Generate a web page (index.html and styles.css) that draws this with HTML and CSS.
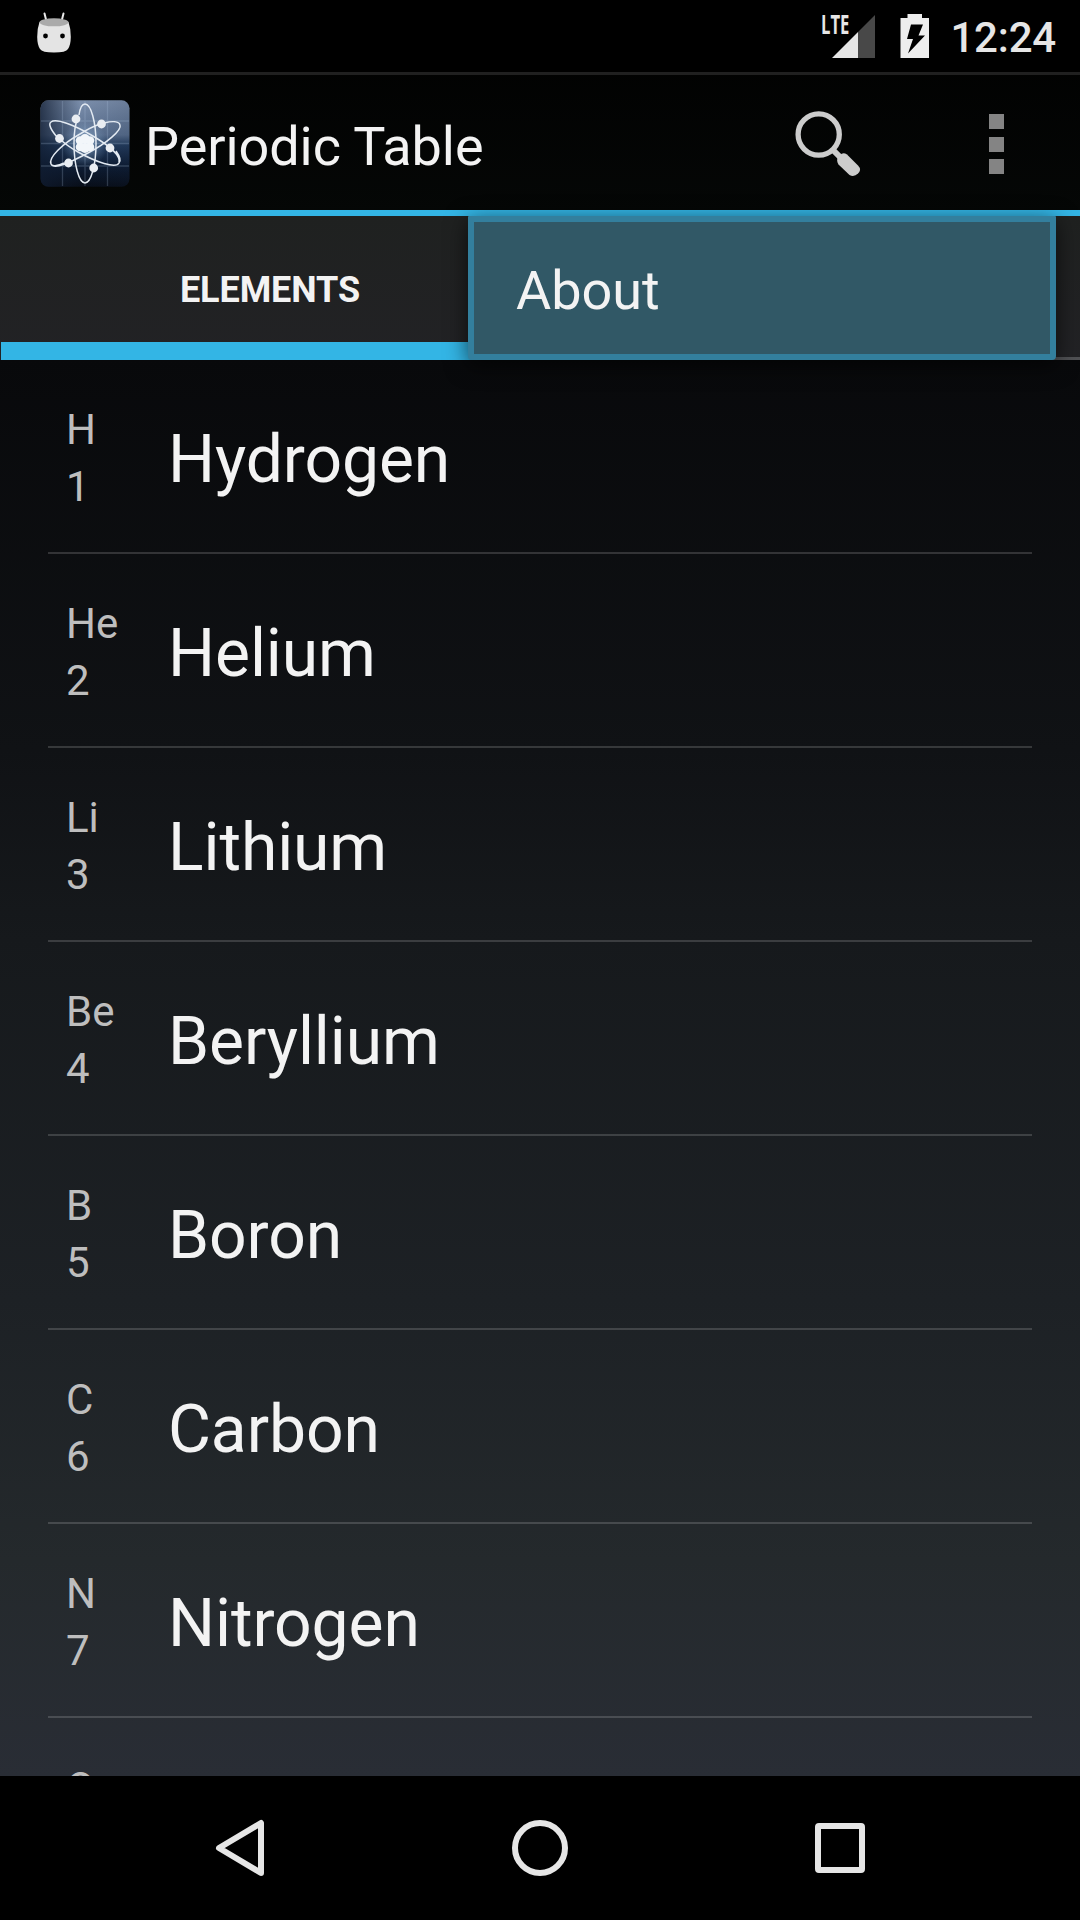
FILE: index.html
```html
<!DOCTYPE html>
<html lang="en">
<head>
<meta charset="utf-8">
<title>Periodic Table</title>
<link rel="stylesheet" href="styles.css">
</head>
<body>
<div class="screen">
  <header class="status-bar">
    <svg class="debug-icon" width="36" height="42" viewBox="0 0 36 42">
      <path d="M8.500 1.500l2 8M27.500 1.500l-2 8" stroke="#e8e8e8" stroke-width="2" stroke-linecap="round"/>
      <path d="M3.500 10Q18 5 32.500 10Q35 17 34.800 25Q34.700 33 32 37Q30 40.500 18 40.600Q6 40.500 4 37Q1.300 33 1.200 25Q1 17 3.500 10Z" fill="#e4e4e4"/>
      <ellipse cx="18" cy="10.300" rx="14.500" ry="4" fill="#aaa"/>
      <circle cx="9.500" cy="24" r="2.400" fill="#000"/><circle cx="26.500" cy="24" r="2.400" fill="#000"/>
    </svg>
    <div class="status-right">
      <div class="signal">
        <span class="network">LTE</span>
        <svg width="43" height="43" viewBox="0 0 43 43"><path d="M43 0V43H26V17Z" fill="#484848"/><path d="M0 43L26 17V43Z" fill="#e6e6e6"/></svg>
      </div>
      <svg class="battery" width="30" height="44" viewBox="0 0 30 44"><path d="M7.500 0H22V4H29V44H.500V4H7.500Z" fill="#eee"/><path d="M11 10.500H23L18.500 21.500H25L8 39.500L13 25H7Z" fill="#000"/></svg>
      <span class="clock">12:24</span>
    </div>
  </header>

  <div class="action-bar">
    <svg class="app-icon" width="90" height="88" viewBox="0 0 90 88">
      <defs>
        <linearGradient id="sky" x1="0" y1="0" x2="0" y2="1"><stop offset="0" stop-color="#7c8fac"/><stop offset=".4" stop-color="#5a7090"/><stop offset=".52" stop-color="#233c5e"/><stop offset=".75" stop-color="#0e1d35"/><stop offset="1" stop-color="#080e19"/></linearGradient>
        <linearGradient id="shade" x1="0" y1="0" x2="1" y2="0"><stop offset="0" stop-color="#101c30" stop-opacity=".75"/><stop offset=".45" stop-color="#101c30" stop-opacity="0"/><stop offset="1" stop-color="#101c30" stop-opacity=".15"/></linearGradient>
        <radialGradient id="glow"><stop offset="0" stop-color="#b9d8f5" stop-opacity=".6"/><stop offset="1" stop-color="#87aacd" stop-opacity="0"/></radialGradient>
      </defs>
      <rect x=".5" y=".3" width="89" height="86.500" rx="8" fill="url(#sky)"/>
      <rect x=".5" y=".3" width="89" height="86.500" rx="8" fill="url(#shade)"/>
      <path d="M22.500 1V86M45 1V86M67.500 1V86M1 21H89M1 43.500H89M1 66H89" stroke="#b2cae4" stroke-opacity=".22" stroke-width="1.300"/>
      <circle cx="45" cy="44" r="23" fill="url(#glow)"/>
      <g fill="none" stroke="#e3eaf2" stroke-width="1.500">
        <path d="M39 15C40 8 42 4 45 4C51 4 56 22 56 43.500S51 83 45 83S34 65 34 43.500C34 33 35.500 23 38 17"/>
        <path d="M17 37C11 30 8 24 11 22C16 18 34 25 52 35.500S81 56 79 63C76 69 56 62 38 52C30 47.500 25 44 20 39M76 51C81 58 81 61 79 63"/>
        <path d="M64 23C72 21 79 21 80 25C82 30 67 43 48 53S14 70 11 64C8 58 22 44 40 34C48 29 54 26 60 24M24 63C16 67 12 66 11 64"/>
      </g>
      <g fill="#e9edf2">
        <circle cx="36" cy="19" r="4.400"/><circle cx="61.500" cy="24" r="4.400"/><circle cx="19.500" cy="38.500" r="4.400"/><circle cx="70" cy="48" r="4.400"/><circle cx="28.500" cy="63" r="4.400"/><circle cx="53.700" cy="68" r="4.400"/>
        <g fill="#f2f6fa"><circle cx="45" cy="39" r="5"/><circle cx="40" cy="40.500" r="4.300"/><circle cx="50" cy="40.500" r="4.300"/><circle cx="40" cy="47" r="4.300"/><circle cx="50" cy="47" r="4.300"/><circle cx="45" cy="48" r="5"/></g>
      </g>
    </svg>
    <h1 class="title">Periodic Table</h1>
    <svg class="search" width="68" height="68" viewBox="0 0 68 68">
      <circle cx="23.700" cy="23.500" r="20.600" fill="none" stroke="#ccc" stroke-width="5.300"/>
      <path d="M38 39L47 48" stroke="#ccc" stroke-width="6"/>
      <path d="M45 44Q48 41 52 43.500L63 54.500Q67 58.500 63 62.500T54.500 64L43.500 53.500Q41 49.500 43 46Z" fill="#ccc"/>
    </svg>
    <div class="overflow"><i></i><i></i><i></i></div>
  </div>

  <div class="tabs">
    <div class="tab tab-active">ELEMENTS</div>
    <div class="tab"></div>
    <div class="menu">About</div>
  </div>

  <main class="list">
    <div class="row"><div class="code"><span>H</span><span>1</span></div><div class="name">Hydrogen</div></div>
    <div class="row"><div class="code"><span>He</span><span>2</span></div><div class="name">Helium</div></div>
    <div class="row"><div class="code"><span>Li</span><span>3</span></div><div class="name">Lithium</div></div>
    <div class="row"><div class="code"><span>Be</span><span>4</span></div><div class="name">Beryllium</div></div>
    <div class="row"><div class="code"><span>B</span><span>5</span></div><div class="name">Boron</div></div>
    <div class="row"><div class="code"><span>C</span><span>6</span></div><div class="name">Carbon</div></div>
    <div class="row"><div class="code"><span>N</span><span>7</span></div><div class="name">Nitrogen</div></div>
    <div class="row"><div class="code"><span>O</span></div></div>
  </main>

  <nav class="nav-bar">
    <div class="nav-button"><svg width="60" height="60" viewBox="0 0 60 60"><path d="M51 5V55L9 30Z"/></svg></div>
    <div class="nav-button"><svg width="60" height="60" viewBox="0 0 60 60"><circle cx="30" cy="30" r="25"/></svg></div>
    <div class="nav-button"><svg width="60" height="60" viewBox="0 0 60 60"><rect x="8" y="8" width="44" height="44" rx="1"/></svg></div>
  </nav>
</div>
</body>
</html>
```
FILE: styles.css
```css
* { box-sizing: border-box; }
body { margin: 0; background: #000; }

.screen {
  display: flex;
  flex-direction: column;
  width: 1080px;
  height: 1920px;
  overflow: hidden;
  background: linear-gradient(#000, #050706 216px, #08090b 360px, #101215 750px, #16191c 940px, #1d2125 1300px, #24292c 1560px, #292d35 1776px);
  color: #f3f3f3;
  font-family: Roboto, sans-serif;
}
svg { display: block; flex: none; }

.status-bar {
  display: flex;
  flex: none;
  align-items: flex-start;
  justify-content: space-between;
  height: 75px;
  padding: 12px 24px 0 36px;
  background: #000;
  border-bottom: 3px solid #202020;
}
.status-right { display: flex; }
.signal { display: flex; padding-top: 2px; }
.network {
  width: 28px;
  margin-right: -17px;
  margin-top: -1px;
  font: 700 26px/23px "Open Sans", sans-serif;
  color: #e6e6e6;
  transform: scaleX(.64);
  transform-origin: left;
}
.signal svg { margin-top: 1px; }
.battery { margin: 2px 20px 0 25px; }
.clock { font-size: 42px; font-weight: 500; line-height: 52px; color: #e6e6e6; letter-spacing: -.2px; }

.action-bar {
  display: flex;
  flex: none;
  align-items: flex-start;
  height: 141px;
  padding: 25px 76px 0 40px;
  border-bottom: 6px solid #33b5e5;
}
.title {
  flex: 1;
  margin: 0 0 0 15px;
  font-size: 54px;
  font-weight: 400;
  line-height: 93px;
  letter-spacing: -.07px;
}
.search { margin: 11px 126px 0 0; }
.overflow { display: flex; flex-direction: column; gap: 7.500px; padding-top: 14px; }
.overflow i { width: 15px; height: 15px; background: #848484; }

.tabs {
  position: relative;
  display: flex;
  flex: none;
  height: 144px;
  background: linear-gradient(#1f2120, #222225);
}
.tab {
  width: 540px;
  border-bottom: 3px solid #505154;
  font-size: 36px;
  font-weight: 700;
  line-height: 149px;
  text-align: center;
}
.tab-active { width: 539px; margin-left: 1px; padding-right: 1px; border-bottom: 18px solid #33b5e5; letter-spacing: -.08px; }
.menu {
  position: absolute;
  top: 0;
  left: 468px;
  width: 588px;
  height: 144px;
  padding-left: 42px;
  border: 6px solid #337f9d;
  border-radius: 1px 1px 4px 4px;
  background: #315866;
  box-shadow: 0 5px 22px rgba(0, 0, 0, .65);
  font-size: 54px;
  line-height: 137px;
}

.list { flex: 1; min-height: 0; overflow: hidden; padding: 0 48px; }
.row {
  display: flex;
  height: 194px;
  padding-left: 18px;
  border-bottom: 2px solid rgba(255, 255, 255, .16);
}
.code {
  display: flex;
  flex-direction: column;
  width: 102px;
  padding-top: 41px;
  color: #bebebe;
  font-size: 42px;
  line-height: 57px;
}
.name { font-size: 66px; line-height: 199px; letter-spacing: -.1px; }

.nav-bar {
  display: flex;
  flex: none;
  justify-content: center;
  align-items: center;
  height: 144px;
  background: #000;
}
.nav-button { display: flex; justify-content: center; width: 300px; }
.nav-button svg { fill: none; stroke: #e6e6e6; stroke-width: 6; stroke-linejoin: round; }
```
